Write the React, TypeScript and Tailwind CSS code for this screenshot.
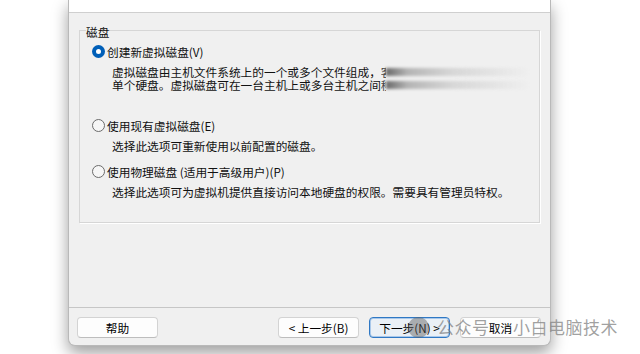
import React from "react";

const font = { fontFamily: '"Noto Sans CJK SC", "Noto Sans", sans-serif' };

function Radio({ checked }: { checked?: boolean }) {
  if (checked) {
    return (
      <span className="w-[13px] h-[13px] rounded-full bg-[#005fb8] flex items-center justify-center shrink-0">
        <span className="w-[5px] h-[5px] rounded-full bg-white" />
      </span>
    );
  }
  return <span className="w-[13px] h-[13px] rounded-full border border-[#6b6b6b] bg-[#f6f6f6] shrink-0" />;
}

function Option({ checked, label, className }: { checked?: boolean; label: string; className?: string }) {
  return (
    <div className={"flex items-center h-[13px] " + (className ?? "")}>
      <Radio checked={checked} />
      <span className="ml-[2px] leading-[13px] whitespace-pre">{label}</span>
    </div>
  );
}

function Blur() {
  return (
    <span className="inline-block align-middle w-[144px] h-[8px] bg-[linear-gradient(90deg,#6a6a6a_0%,#b4b4b4_15%,#d6d6d6_45%,rgba(240,240,240,0)_100%)] blur-[1.5px]" />
  );
}

function Btn({ children, focused }: { children: React.ReactNode; focused?: boolean }) {
  return (
    <button
      className={
        "w-[81px] h-[21px] rounded-[4px] text-[11.7px] leading-[13px] text-black flex items-center justify-center " +
        (focused
          ? "border border-[#2f78c4] bg-[#eaf0f6] shadow-[inset_0_0_0_1px_#a9c8ea]"
          : "border border-[#d3d3d3] border-b-[#bdbdbd] bg-[#fdfdfd]")
      }
    >
      {children}
    </button>
  );
}

export default function App() {
  return (
    <div className="w-[640px] h-[354px] bg-white overflow-hidden relative flex" style={font}>
      <div className="w-[68px] shrink-0" />
      <div className="w-[483px] h-[346px] shrink-0 flex flex-col border-x border-b border-[#b9b9b9] rounded-b-[7px] bg-[#f0f0f0] shadow-[0_7px_16px_rgba(0,0,0,0.38)] text-[11.7px] text-[#111] overflow-hidden">
        <div className="h-[13px] bg-white border-b border-[#cfcfcf] shrink-0" />
        <div className="flex-1 px-[10px] pt-[9px]">
          <fieldset className="border border-[#d6d6d6] shadow-[1px_1px_0_#ffffff] pb-[24px]">
            <legend className="ml-[6px] pt-[3px] leading-[13px]">磁盘</legend>
            <div className="pl-[12px] flex flex-col">
              <Option checked label="创建新虚拟磁盘(V)" className="mt-[7px]" />
              <div className="mt-[7px] pl-[20px] leading-[13px]">
                <div className="whitespace-nowrap flex items-center">
                  <span>虚拟磁盘由主机文件系统上的一个或多个文件组成，</span>
                  <span className="inline-block w-[5px] overflow-hidden text-[#444]">客</span>
                  <Blur />
                </div>
                <div className="whitespace-nowrap flex items-center">
                  <span>单个硬盘。虚拟磁盘可在一台主机上或多台主机之间</span>
                  <span className="inline-block w-[5px] overflow-hidden text-[#444]">移</span>
                  <Blur />
                </div>
              </div>
              <Option label="使用现有虚拟磁盘(E)" className="mt-[28px]" />
              <div className="mt-[7px] pl-[20px] leading-[13px]">选择此选项可重新使用以前配置的磁盘。</div>
              <Option label="使用物理磁盘 (适用于高级用户)(P)" className="mt-[13px]" />
              <div className="mt-[7px] pl-[20px] leading-[13px] whitespace-nowrap">
                选择此选项可为虚拟机提供直接访问本地硬盘的权限。需要具有管理员特权。
              </div>
            </div>
          </fieldset>
        </div>
        <div className="shrink-0 border-t border-[#c6c6c6] pt-[9px] pb-[7px] pl-[8px] pr-[9px] flex items-center">
          <Btn>帮助</Btn>
          <div className="flex-1" />
          <div className="flex gap-[10px]">
            <Btn>&lt; 上一步(B)</Btn>
            <Btn focused>下一步(N) &gt;</Btn>
            <Btn>取消</Btn>
          </div>
        </div>
      </div>
      <div className="flex-1" />

      {/* touch indicator */}
      <div className="absolute left-[408px] top-[317px] w-[21px] h-[21px] rounded-full bg-[rgba(90,90,90,0.45)]" />
      {/* watermark */}
      <div className="absolute left-[437px] top-[317px] text-[17px] leading-[20px] text-[rgba(130,130,130,0.75)] tracking-[0.5px]">
        公众号
      </div>
      <div className="absolute left-[513px] top-[317px] text-[17px] leading-[20px] text-[rgba(130,130,130,0.75)] tracking-[0.5px]">
        小白电脑技术
      </div>
    </div>
  );
}
